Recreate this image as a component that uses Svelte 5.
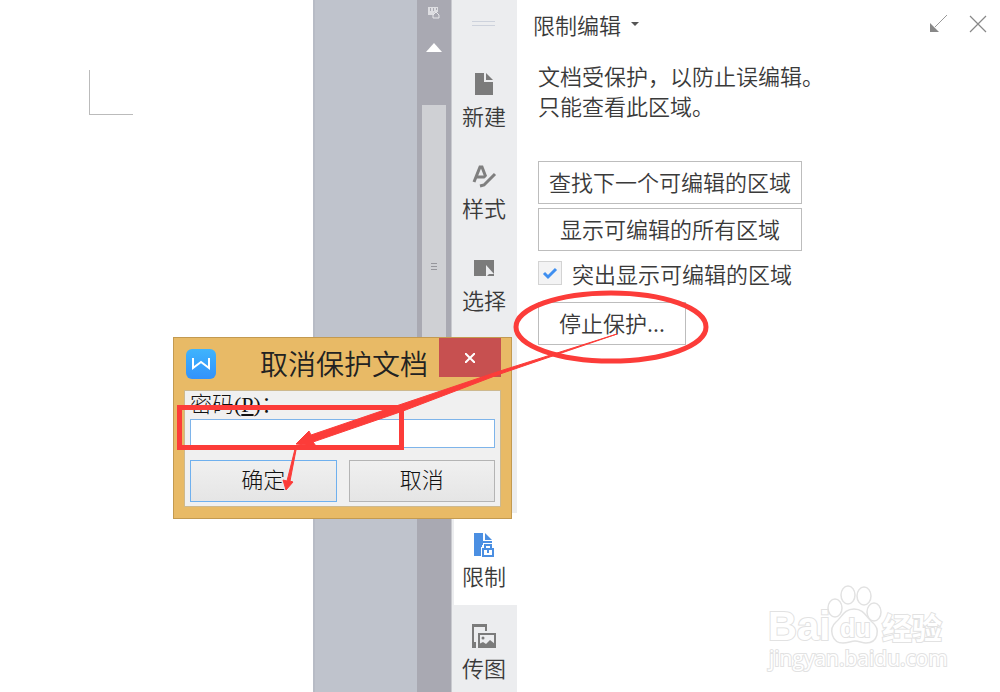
<script lang="ts">
  type IconName = "page" | "style" | "select" | "lock" | "picture";

  interface Tool {
    label: string;
    icon: IconName;
    row: number;
  }

  const TOOLS: Tool[] = [
    { label: "新建", icon: "page", row: 1 },
    { label: "样式", icon: "style", row: 2 },
    { label: "选择", icon: "select", row: 3 },
    { label: "限制", icon: "lock", row: 6 },
    { label: "传图", icon: "picture", row: 7 },
  ];

  let active = $state("限制");
  let highlight = $state(true);
  let password = $state("");
</script>

<div class="app">
  <main class="document">
    <div class="crop-mark"></div>
  </main>

  <div class="canvas"></div>

  <div class="scrollbar">
    <svg class="ruler-toggle" viewBox="0 0 12 12" aria-hidden="true">
      <path d="M0 0h10v5h-3l-2 3h-5z" fill="#dedee2" />
      <path d="M2.5 1v3M5.5 1v3M8.5 1v2" stroke="#a9a9b2" />
      <path d="M5 8l3-3 3 3v3h-6z" fill="#a9a9b2" stroke="#e8e8eb" />
    </svg>
    <svg class="scroll-up" viewBox="0 0 16 9" aria-hidden="true">
      <path d="M8 0l8 9h-16z" fill="#fff" />
    </svg>
    <div class="thumb"><i></i><i></i><i></i></div>
  </div>

  <nav class="toolbar">
    <div class="handle"></div>
    {#each TOOLS as tool (tool.label)}
      <button
        class="tool row-{tool.row}"
        class:active={active === tool.label}
        onclick={() => (active = tool.label)}
      >
        <svg viewBox="0 0 26 26" aria-hidden="true">
          {#if tool.icon === "page"}
            <path d="M4 2h9v9h9v13h-18z" fill="#7b7b7b" />
            <path d="M15 2l7 7h-7z" fill="#7b7b7b" />
          {:else if tool.icon === "style"}
            <path
              d="M3 19l6-15h2l5 13M5 14h9"
              fill="none"
              stroke="#7f7f7f"
              stroke-width="3"
            />
            <path d="M9 22l3-1L24 8" fill="none" stroke="#ecedef" stroke-width="5" />
            <path
              d="M9 23l4-1L24 11"
              fill="none"
              stroke="#7f7f7f"
              stroke-width="3"
            />
          {:else if tool.icon === "select"}
            <path d="M3 5h20v16h-20z" fill="#7b7b7b" />
            <path d="M15 10v12l3-3h5z" fill="#ecedef" />
          {:else if tool.icon === "lock"}
            <path d="M3 2h9v8h9v4h-10v11h-8z" fill="#4b8fe2" />
            <path d="M14 2l7 7h-7z" fill="#4b8fe2" />
            <path
              d="M12 18h10v7h-10zM14 18v-4h6v4"
              fill="#fff"
              stroke="#fff"
              stroke-width="4"
            />
            <path
              d="M12 18h10v7h-10zM14 18v-4h6v4"
              fill="#fff"
              stroke="#4b8fe2"
              stroke-width="2"
            />
            <path d="M16 19h2v3h-2z" fill="#4b8fe2" />
          {:else}
            <path
              d="M2 24v-22h13v6M2 3h13"
              fill="none"
              stroke="#7b7b7b"
              stroke-width="2"
            />
            <path d="M1 19h4v6h-4z" fill="#7b7b7b" />
            <path d="M8 11h16v13h-16z" fill="none" stroke="#7b7b7b" stroke-width="2" />
            <path d="M8 24v-3l4-2 3 2 4-4 5 4v3z" fill="#7b7b7b" />
            <circle cx="12" cy="15" r="1.5" fill="#7b7b7b" />
          {/if}
        </svg>
        <span>{tool.label}</span>
      </button>
    {/each}
  </nav>

  <aside class="panel">
    <header class="panel-head">
      <button class="panel-title">
        限制编辑
        <svg class="caret" viewBox="0 0 8 4" aria-hidden="true">
          <path d="M0 0h8l-4 4z" fill="#555" />
        </svg>
      </button>
      <button class="icon-btn" aria-label="收起">
        <svg viewBox="0 0 18 18" aria-hidden="true">
          <path d="M17 0L5 12" stroke="#999" />
          <path d="M0 8v9h9z" fill="#888" />
        </svg>
      </button>
      <button class="icon-btn" aria-label="关闭">
        <svg viewBox="0 0 18 18" aria-hidden="true">
          <path d="M1 1l16 16M17 1L1 17" stroke="#888" stroke-width="1.2" />
        </svg>
      </button>
    </header>

    <div class="panel-body">
      <p>文档受保护，以防止误编辑。<br />只能查看此区域。</p>
      <button class="box-btn">查找下一个可编辑的区域</button>
      <button class="box-btn">显示可编辑的所有区域</button>
      <label class="check">
        <span class="check-box">
          <input type="checkbox" bind:checked={highlight} />
          {#if highlight}
            <svg viewBox="0 0 24 24" aria-hidden="true">
              <path
                d="M6 12l4 4 8-8"
                fill="none"
                stroke="#3f8ff0"
                stroke-width="3"
              />
            </svg>
          {/if}
        </span>
        突出显示可编辑的区域
      </label>
      <button class="box-btn stop">停止保护...</button>
    </div>
  </aside>

  <div class="dialog" role="dialog" aria-labelledby="dialog-title">
    <header class="dialog-head">
      <svg class="logo" viewBox="0 0 30 30" aria-hidden="true">
        <defs>
          <linearGradient id="logo-fill" x1="0" y1="0" x2="0" y2="1">
            <stop offset="0" stop-color="#3fb4fd" />
            <stop offset="1" stop-color="#3292fb" />
          </linearGradient>
        </defs>
        <rect width="30" height="30" rx="6" fill="url(#logo-fill)" />
        <path
          d="M7 9v10l8-6 8 6v-10"
          fill="none"
          stroke="#fff"
          stroke-width="2"
        />
      </svg>
      <h1 id="dialog-title">取消保护文档</h1>
      <button class="close" aria-label="关闭">
        <svg viewBox="0 0 10 10" aria-hidden="true">
          <path d="M0 0l10 10M10 0L0 10" stroke="#fff" stroke-width="2" />
        </svg>
      </button>
    </header>
    <form class="dialog-body" onsubmit={(e) => e.preventDefault()}>
      <label for="password">密码(<u>P</u>)：</label>
      <input id="password" type="password" bind:value={password} />
      <div class="actions">
        <button type="submit" class="primary">确定</button>
        <button type="button">取消</button>
      </div>
    </form>
  </div>

  <svg class="watermark" viewBox="0 0 190 90" aria-hidden="true">
    <g fill="#fff" stroke="#e2e2e2" stroke-width="1.5">
      <text x="8" y="58" class="wm-latin">Bai</text>
      <ellipse cx="75" cy="26" rx="7" ry="9" />
      <ellipse cx="88" cy="13" rx="7" ry="9" />
      <ellipse cx="104" cy="14" rx="7" ry="9" />
      <ellipse cx="114" cy="30" rx="7" ry="9" />
      <path
        d="M94 27C84 27 82 35 76 40C68 47 72 61 83 61C88 61 91 59 95 59C99 59 102 61 106 61C118 61 121 47 112 40C106 35 104 27 94 27Z"
      />
      <text x="80" y="55" class="wm-du">du</text>
      <text x="122" y="57" class="wm-cjk">经验</text>
      <text x="9" y="84" class="wm-url">jingyan.baidu.com</text>
    </g>
  </svg>

  <!-- Red marks: circled button, framed field, arrows between the steps -->
  <svg class="marks" width="1000" height="692" aria-hidden="true">
    <ellipse cx="611" cy="327" rx="95" ry="34" />
    <rect x="179.5" y="407.5" width="222" height="40" />
    <path
      class="arrow"
      d="M617 334L500 371L402 404L311 435L309 431L296 444L316 446L313 442L403 411L500 374Z"
    />
    <path class="arrow" d="M295 449L287 481L283 480L286 490L293 482L290 481L296 450Z" />
  </svg>
</div>

<style>
  :global(body) {
    background: #fff;
  }

  .app {
    position: relative;
    display: flex;
    min-height: 100vh;
    overflow: hidden;
    font-family: "Noto Sans CJK SC", sans-serif;
    font-size: 22px;
    font-weight: 350;
    line-height: 30px;
    color: #3a3a3a;
  }

  button {
    margin: 0;
    padding: 0;
    border: 0;
    background: none;
    font: inherit;
    color: inherit;
  }

  svg {
    display: block;
  }

  .document {
    flex: 0 0 313px;
    box-sizing: border-box;
    padding: 70px 0 0 89px;
    background: #fff;
  }

  .crop-mark {
    width: 43px;
    height: 44px;
    border-left: 1px solid #bbb;
    border-bottom: 1px solid #bbb;
  }

  .canvas {
    flex: 0 0 104px;
    box-sizing: border-box;
    border-left: 2px solid #b7bbc5;
    background: #bfc3cc;
  }

  .scrollbar {
    flex: 0 0 34px;
    display: flex;
    flex-direction: column;
    align-items: center;
    background: #a9a9b2;
  }

  .ruler-toggle {
    width: 12px;
    height: 12px;
    margin-top: 7px;
  }

  .scroll-up {
    width: 16px;
    height: 9px;
    margin-top: 24px;
  }

  .thumb {
    display: flex;
    flex-direction: column;
    justify-content: center;
    align-items: center;
    gap: 2px;
    width: 24px;
    height: 322px;
    margin-top: 53px;
    background: #cfd0d4;
  }

  .thumb i {
    width: 6px;
    height: 1px;
    background: #96969c;
  }

  .toolbar {
    flex: 0 0 66px;
    box-sizing: border-box;
    display: grid;
    grid-template-rows: 53px;
    grid-auto-rows: 92px;
    height: 100vh;
    overflow: hidden;
    border-left: 1px solid #c9cacf;
    background: #ecedef;
  }

  .handle {
    width: 23px;
    height: 3px;
    margin: 21px auto 0 20px;
    border-top: 1px solid #cdd2dc;
    border-bottom: 1px solid #cdd2dc;
  }

  .tool {
    display: flex;
    flex-direction: column;
    align-items: center;
    margin-left: 2px;
    padding: 18px 3px 0 0;
  }

  .tool svg {
    width: 26px;
    height: 26px;
    margin-bottom: 3px;
  }

  .row-1 {
    grid-row: 2;
  }
  .row-2 {
    grid-row: 3;
  }
  .row-3 {
    grid-row: 4;
  }
  .row-6 {
    grid-row: 7;
  }
  .row-7 {
    grid-row: 8;
  }

  .tool.active {
    background: #fff;
  }

  .panel {
    flex: 1;
    min-width: 0;
    background: #fff;
  }

  .panel-head {
    display: flex;
    align-items: center;
    gap: 21px;
    height: 48px;
    padding: 0 13px 0 16px;
  }

  .panel-title {
    display: flex;
    align-items: center;
    gap: 10px;
    margin-right: auto;
  }

  .caret {
    width: 8px;
    height: 4px;
  }

  .icon-btn svg {
    width: 18px;
    height: 18px;
  }

  .panel-body {
    display: flex;
    flex-direction: column;
    align-items: flex-start;
    padding: 12px 21px;
  }

  p {
    margin: 0 0 41px;
  }

  .box-btn {
    box-sizing: border-box;
    width: 264px;
    height: 43px;
    margin-bottom: 4px;
    padding-bottom: 3px;
    border: 1px solid #bdbdbd;
    background: #fff;
  }

  .stop {
    width: 148px;
  }

  .check {
    display: flex;
    align-items: center;
    gap: 10px;
    margin: 3px 0 14px;
  }

  .check-box {
    display: grid;
  }

  .check-box > * {
    grid-area: 1 / 1;
    width: 24px;
    height: 24px;
  }

  .check-box svg {
    pointer-events: none;
  }

  .check input {
    box-sizing: border-box;
    appearance: none;
    margin: 0;
    border: 1px solid #d3d3d3;
    background: #f3f3f4;
  }

  .dialog {
    position: absolute;
    left: 173px;
    top: 337px;
    box-sizing: border-box;
    width: 339px;
    padding: 0 10px 11px;
    border: 1px solid #c39a50;
    background: #e8ba66;
  }

  .dialog-head {
    display: flex;
    align-items: flex-start;
    height: 52px;
  }

  .logo {
    width: 30px;
    height: 30px;
    margin: 11px 0 0 2px;
  }

  h1 {
    flex: 1;
    margin: 5px 11px 0 0;
    font-size: 28px;
    font-weight: 350;
    line-height: 40px;
    text-align: right;
    color: #222;
  }

  .close {
    display: grid;
    place-items: center;
    width: 62px;
    height: 39px;
    background: #c75050;
  }

  .close svg {
    width: 10px;
    height: 10px;
  }

  .dialog-body {
    display: flex;
    flex-direction: column;
    box-sizing: border-box;
    height: 117px;
    padding: 0 5px 5px;
    border: 1px solid #cdb98f;
    background: #f0f0f0;
    font-family: "Liberation Serif", "Noto Sans CJK SC", serif;
    font-weight: 300;
    color: #111;
  }

  .dialog-body label {
    line-height: 28px;
  }

  .dialog-body input {
    box-sizing: border-box;
    width: 100%;
    height: 29px;
    margin: 0 0 12px;
    padding: 0 6px;
    border: 1px solid #7eb4ea;
    outline: none;
    background: #fff;
    font: inherit;
  }

  .actions {
    display: grid;
    grid-template-columns: 1fr 1fr;
    gap: 12px;
  }

  .actions button {
    height: 42px;
    border: 1px solid #b4b4b4;
    background: linear-gradient(#f0f0f0, #e5e5e5);
  }

  .actions .primary {
    border-color: #6fb0ee;
  }

  .watermark {
    position: absolute;
    right: 50px;
    bottom: 20px;
    width: 190px;
    height: 90px;
    overflow: visible;
  }

  .watermark text {
    paint-order: stroke;
    stroke-width: 2px;
  }

  .wm-latin,
  .wm-du {
    font-family: "Liberation Sans", sans-serif;
    font-weight: 700;
    font-size: 40px;
  }

  .wm-du {
    font-size: 25px;
  }

  .wm-cjk {
    font-weight: 700;
    font-size: 30px;
  }

  .wm-url {
    font-family: "Open Sans", sans-serif;
    font-weight: 400;
    font-size: 21px;
  }

  .marks {
    position: absolute;
    left: 0;
    top: 0;
    pointer-events: none;
    fill: none;
    stroke: #fc3c39;
    stroke-width: 5;
  }

  .arrow {
    fill: #fc3c39;
    stroke-width: 1;
  }
</style>
